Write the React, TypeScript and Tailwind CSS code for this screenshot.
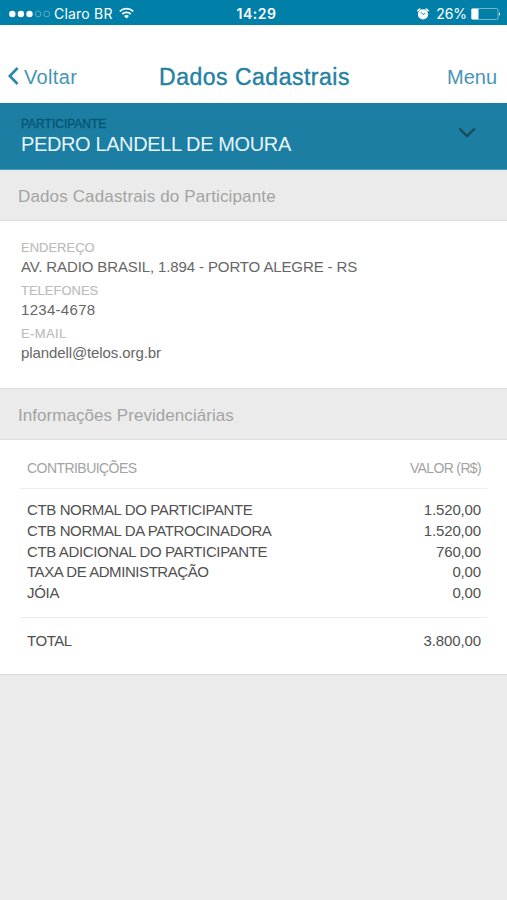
interface Contribution {
  label: string;
  value: string;
  labelClass: string;
}

const contributions: Contribution[] = [
  { label: "CTB NORMAL DO PARTICIPANTE", value: "1.520,00", labelClass: "tracking-[-0.38px]" },
  { label: "CTB NORMAL DA PATROCINADORA", value: "1.520,00", labelClass: "tracking-[-0.38px]" },
  { label: "CTB ADICIONAL DO PARTICIPANTE", value: "760,00", labelClass: "tracking-[-0.38px]" },
  { label: "TAXA DE ADMINISTRAÇÃO", value: "0,00", labelClass: "tracking-[-0.43px]" },
  { label: "JÓIA", value: "0,00", labelClass: "tracking-[-0.3px]" },
];

const contacts = [
  { label: "ENDEREÇO", value: "AV. RADIO BRASIL, 1.894 - PORTO ALEGRE - RS", labelClass: "tracking-[0px]", valueClass: "tracking-[-0.12px]" },
  { label: "TELEFONES", value: "1234-4678", labelClass: "tracking-[0px]", valueClass: "tracking-[0.3px]" },
  { label: "E-MAIL", value: "plandell@telos.org.br", labelClass: "tracking-[0.4px]", valueClass: "tracking-[-0.1px]" },
];

function StatusBar() {
  return (
    <div className="h-[25px] bg-[#0080a9] grid grid-cols-3 items-center pl-[9px] pr-[7px] pt-[2px] text-white text-[14px] leading-[20px] font-['Inter',sans-serif]">
      <div className="flex items-center">
        <svg width="42" height="8" viewBox="0 0 42 8">
          <circle cx="3.3" cy="4" r="3.2" fill="white" />
          <circle cx="11.9" cy="4" r="3.2" fill="white" />
          <circle cx="20.5" cy="4" r="3.2" fill="white" />
          <circle cx="29.1" cy="4" r="2.9" fill="none" stroke="#7cbdd2" strokeWidth="0.7" />
          <circle cx="37.7" cy="4" r="2.9" fill="none" stroke="#7cbdd2" strokeWidth="0.7" />
        </svg>
        <span className="ml-[3px] tracking-[0.2px] whitespace-nowrap">Claro BR</span>
        <svg className="ml-[6px] mb-[2px] shrink-0" width="15" height="12" viewBox="0 0 15 12" fill="none" stroke="white" strokeWidth="1.8">
          <path d="M0.8 4.3a9.6 9.6 0 0 1 13.4 0" />
          <path d="M3.3 7a6 6 0 0 1 8.4 0" />
          <path d="M7.5 11.6L5 9.1a3.6 3.6 0 0 1 5 0z" fill="white" stroke="none" />
        </svg>
      </div>
      <span className="pl-[4px] text-center font-semibold tracking-[0.5px]">14:29</span>
      <div className="flex items-center justify-end">
        <svg className="mr-[7px]" width="12" height="12" viewBox="0 0 12 12" fill="none">
          <circle cx="6" cy="6.4" r="5.1" fill="white" />
          <path d="M0.9 2.7L2.8 1M11.1 2.7L9.2 1" stroke="white" strokeWidth="1.6" strokeLinecap="round" />
          <path d="M4 4.2L6 6.6L8.3 5.2" stroke="#0080a9" strokeWidth="0.9" />
        </svg>
        <span className="tracking-[-0.1px]">26%</span>
        <svg className="ml-[4px] mr-[-1px]" width="30" height="12" viewBox="0 0 30 12">
          <rect x="0.5" y="0.5" width="26.5" height="11" rx="1.5" fill="none" stroke="#8fc7d9" strokeWidth="0.8" />
          <rect x="0.5" y="0.8" width="7" height="10.4" rx="0.8" fill="white" />
          <path d="M28 4.2a2 2 0 0 1 0 3.6z" fill="white" />
        </svg>
      </div>
    </div>
  );
}

function SectionHeader({ title, className }: { title: string; className: string }) {
  return (
    <h2 className={`h-[51px] bg-[#ebebeb] border-b border-[#dedede] pl-[18px] pt-[2px] text-[17px] leading-[50px] text-[#a3a3a3] ${className}`}>
      {title}
    </h2>
  );
}

export default function App() {
  return (
    <main className="min-h-screen bg-[#ebebeb] font-['Liberation_Sans',Arial,sans-serif]">
      <StatusBar />

      <nav className="h-[78px] bg-white flex items-center justify-between pl-[8px] pr-[10px] pt-[25px] text-[20px] text-[#4795b4]">
        <button className="flex items-center w-[112px] tracking-[0.35px]">
          <svg className="mr-[5px] mb-[2px]" width="11" height="18" viewBox="0 0 11 18" fill="none" stroke="#2d86a8" strokeWidth="2.6">
            <path d="M9.6 1L1.8 9L9.6 17" />
          </svg>
          Voltar
        </button>
        <h1 className="pt-[2px] text-[23px] tracking-[0.5px] text-[#2581a4] [-webkit-text-stroke:0.4px_#2581a4]">Dados Cadastrais</h1>
        <button className="w-[108px] text-right">Menu</button>
      </nav>

      <section className="h-[67px] bg-[#1c7ea3] border-b border-[#4c9bb6] pl-[21px] pr-[31px] flex justify-between">
        <div className="pt-[14px]">
          <p className="text-[12px] leading-[14px] text-[#04556f] [-webkit-text-stroke:0.3px_#04556f]">PARTICIPANTE</p>
          <p className="text-[20px] leading-[26px] tracking-[-0.38px] text-[#e4f5fb]">PEDRO LANDELL DE MOURA</p>
        </div>
        <svg className="mt-[24px]" width="18" height="11" viewBox="0 0 18 11" fill="none" stroke="#1b4a5c" strokeWidth="2.4">
          <path d="M1.2 1.5L9 9L16.8 1.5" />
        </svg>
      </section>

      <SectionHeader title="Dados Cadastrais do Participante" className="tracking-[0.14px]" />
      <section className="h-[168px] bg-white border-b border-[#dedede] pl-[21px] pt-[17px]">
        {contacts.map((c) => (
          <div key={c.label} className="h-[43px] whitespace-nowrap">
            <p className={`text-[13px] leading-[20px] text-[#bdbdbd] [-webkit-text-stroke:0.2px_#bdbdbd] ${c.labelClass}`}>{c.label}</p>
            <p className={`text-[15px] leading-[17px] text-[#666666] ${c.valueClass}`}>{c.value}</p>
          </div>
        ))}
      </section>

      <SectionHeader title="Informações Previdenciárias" className="tracking-[0.05px]" />
      <section className="h-[235px] bg-white border-b border-[#dadada] px-[20px] text-[15px] leading-[20.75px] text-[#505050]">
        <div className="h-[49px] pt-[18px] pl-[7px] pr-[6px] flex justify-between text-[14px] text-[#a3a3a3] border-b border-[#ededed]">
          <span className="tracking-[-0.55px]">CONTRIBUIÇÕES</span>
          <span className="tracking-[-0.65px]">VALOR (R$)</span>
        </div>
        <div className="h-[129px] pt-[11px] pl-[7px] pr-[6px] border-b border-[#ededed]">
          {contributions.map((c) => (
            <div key={c.label} className="flex justify-between">
              <span className={c.labelClass}>{c.label}</span>
              <span className="tracking-[-0.15px]">{c.value}</span>
            </div>
          ))}
        </div>
        <div className="pt-[13px] pl-[7px] pr-[6px] flex justify-between">
          <span className="tracking-[-0.45px]">TOTAL</span>
          <span className="tracking-[-0.1px]">3.800,00</span>
        </div>
      </section>
    </main>
  );
}
